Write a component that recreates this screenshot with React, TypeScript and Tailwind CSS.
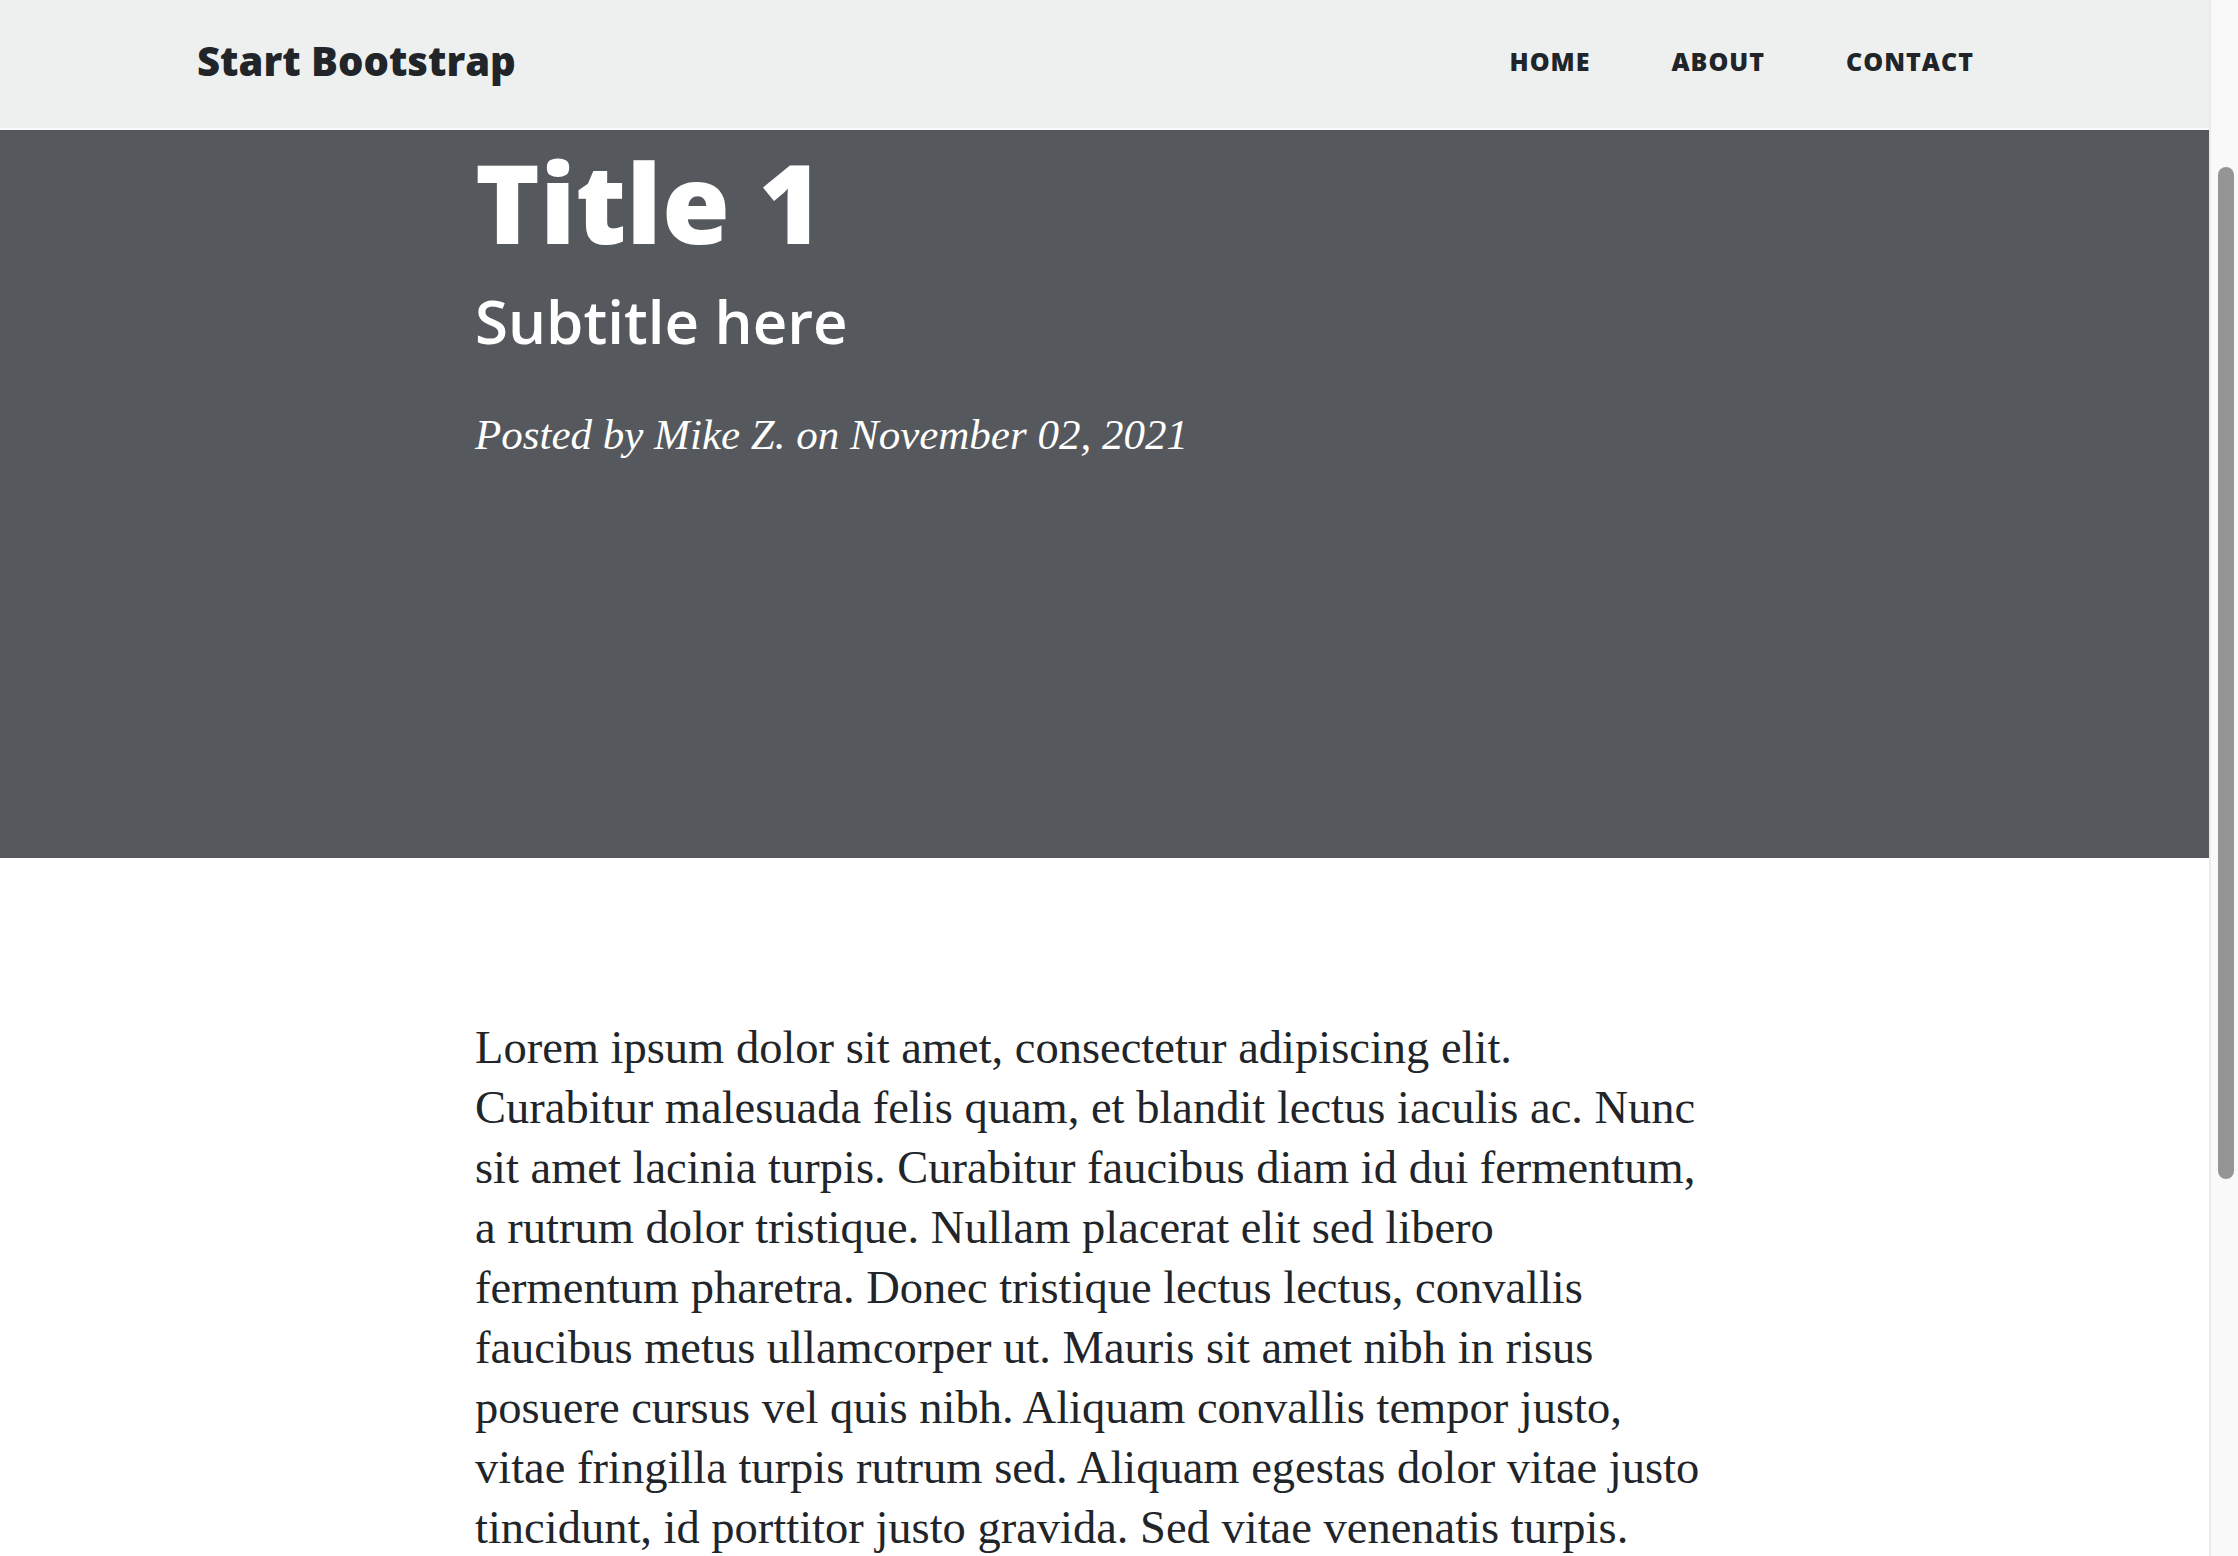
import React from "react";

const lines = [
  "Lorem ipsum dolor sit amet, consectetur adipiscing elit.",
  "Curabitur malesuada felis quam, et blandit lectus iaculis ac. Nunc",
  "sit amet lacinia turpis. Curabitur faucibus diam id dui fermentum,",
  "a rutrum dolor tristique. Nullam placerat elit sed libero",
  "fermentum pharetra. Donec tristique lectus lectus, convallis",
  "faucibus metus ullamcorper ut. Mauris sit amet nibh in risus",
  "posuere cursus vel quis nibh. Aliquam convallis tempor justo,",
  "vitae fringilla turpis rutrum sed. Aliquam egestas dolor vitae justo",
  "tincidunt, id porttitor justo gravida. Sed vitae venenatis turpis.",
];

export default function App() {
  return (
    <div className="flex h-[1556px] w-[2238px] overflow-hidden bg-white">
      <div className="flex w-[2209px] shrink-0 flex-col">
        <nav className="flex h-[130px] shrink-0 items-center justify-between border-b-2 border-[#f8f9fa] bg-[#eef0ef] pb-[6px] pl-[197px] pr-[235px] font-['Open_Sans',sans-serif] text-[#212529]">
          <span className="text-[40px] font-extrabold leading-none">Start Bootstrap</span>
          <div className="flex items-center gap-[81px] text-[25px] font-extrabold uppercase leading-none tracking-[1px]">
            <span>Home</span>
            <span>About</span>
            <span>Contact</span>
          </div>
        </nav>
        <header className="flex h-[728px] shrink-0 flex-col bg-[#55595d] pl-[475px] pt-[16px] text-white">
          <h1 className="font-['Open_Sans',sans-serif] text-[110px] font-extrabold leading-none">Title 1</h1>
          <h2 className="mt-[32px] font-['Open_Sans',sans-serif] text-[60px] font-semibold leading-[66px]">Subtitle here</h2>
          <p className="mt-[51px] font-['Liberation_Serif',serif] text-[43px] italic leading-[60px]">
            Posted by Mike Z. on November 02, 2021
          </p>
        </header>
        <main className="flex flex-col pl-[475px] pt-[160px] font-['Liberation_Serif',serif] text-[46.5px] leading-[60px] text-[#212529]">
          {lines.map((l) => (
            <span key={l} className="block whitespace-nowrap">
              {l}
            </span>
          ))}
        </main>
      </div>
      <div className="flex w-[29px] shrink-0 flex-col border-l-2 border-[#ebebeb] bg-[#f9f9f9] pl-[7px] pt-[167px]">
        <div className="h-[1012px] w-[16px] rounded-full bg-[#959595]" />
      </div>
    </div>
  );
}
